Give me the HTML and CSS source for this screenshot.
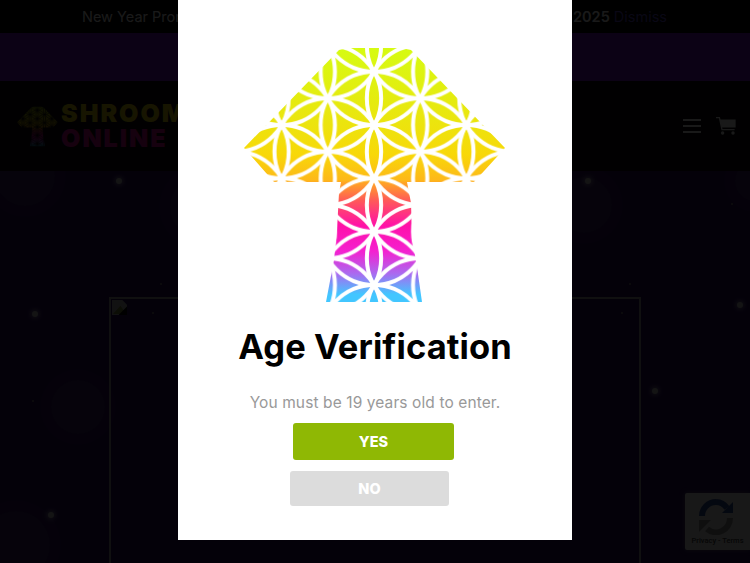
FILE: index.html
```
<html>
<head>
    <link rel="stylesheet" href="styles.css">
</head>

<body>
    <!-- shared mushroom artwork -->
    <svg class="defs" width="0" height="0">
        <defs>
            <linearGradient id="shroomFill" gradientUnits="userSpaceOnUse" x1="0" y1="48" x2="0" y2="302">
                <stop offset="0" stop-color="#d6fb12"/>
                <stop offset="0.3" stop-color="#ece40e"/>
                <stop offset="0.42" stop-color="#f8d808"/>
                <stop offset="0.52" stop-color="#fdb81a"/>
                <stop offset="0.53" stop-color="#ffa524"/>
                <stop offset="0.6" stop-color="#ff5a58"/>
                <stop offset="0.7" stop-color="#ff10a8"/>
                <stop offset="0.8" stop-color="#f420d0"/>
                <stop offset="0.89" stop-color="#a86cf0"/>
                <stop offset="0.97" stop-color="#42c6ff"/>
            </linearGradient>
            <pattern id="flower" patternUnits="userSpaceOnUse" x="375" y="71.7" width="92.38" height="53.33">
                <g fill="none" stroke="#000" stroke-width="4">
                    <circle cx="0" cy="-53.33" r="53.33"/>
                    <circle cx="0" cy="0" r="53.33"/>
                    <circle cx="0" cy="53.33" r="53.33"/>
                    <circle cx="0" cy="106.66" r="53.33"/>
                    <circle cx="92.38" cy="-53.33" r="53.33"/>
                    <circle cx="92.38" cy="0" r="53.33"/>
                    <circle cx="92.38" cy="53.33" r="53.33"/>
                    <circle cx="92.38" cy="106.66" r="53.33"/>
                    <circle cx="46.19" cy="-26.67" r="53.33"/>
                    <circle cx="46.19" cy="26.67" r="53.33"/>
                    <circle cx="46.19" cy="80" r="53.33"/>
                    <circle cx="-46.19" cy="-26.67" r="53.33"/>
                    <circle cx="-46.19" cy="26.67" r="53.33"/>
                    <circle cx="-46.19" cy="80" r="53.33"/>
                    <circle cx="138.57" cy="-26.67" r="53.33"/>
                    <circle cx="138.57" cy="26.67" r="53.33"/>
                    <circle cx="138.57" cy="80" r="53.33"/>
                </g>
            </pattern>
            <mask id="gaps" maskUnits="userSpaceOnUse" x="240" y="40" width="272" height="270">
                <rect x="240" y="40" width="272" height="270" fill="#fff"/>
                <rect x="240" y="40" width="272" height="270" fill="url(#flower)"/>
            </mask>
            <symbol id="shroom" viewBox="245 48 262 254">
                <path mask="url(#gaps)" fill="url(#shroomFill)" d="M349 48H402L412 50L506 148L475 182H408L412 203L413 237L418 267L423 302H327L335 260L338 230L340 193L342 182H275L245 148L340 50Z"/>
            </symbol>
        </defs>
    </svg>

    <div class="topbar">
        <span>New Year Promo</span>
        <span class="topbar-right"><b>2025</b> <a class="dismiss">Dismiss</a></span>
    </div>
    <div class="band"></div>

    <header class="site-header">
        <div class="logo">
            <svg class="logo-icon"><use href="#shroom"/></svg>
            <div class="logo-text">
                <div class="logo-top">SHROOM</div>
                <div class="logo-bottom">ONLINE</div>
            </div>
        </div>
        <div class="header-icons">
            <div class="burger"><i></i><i></i><i></i></div>
            <svg class="cart" viewBox="0 0 20 18">
                <path d="M0 .6H3.4L6 12.6H18.6" fill="none" stroke="#fff" stroke-width="1.3"/>
                <path d="M3.8 2.4H19.6V10.6H5.6Z" fill="#fff"/>
                <circle cx="6.6" cy="16" r="1.7" fill="#fff"/>
                <circle cx="17" cy="16" r="1.7" fill="#fff"/>
            </svg>
        </div>
    </header>

    <main class="content">
        <div class="bubble b1"></div>
        <div class="bubble b2"></div>
        <div class="bubble b3"></div>
        <div class="bubble b4"></div>
        <div class="bubble b5"></div>
        <div class="bubble b6"></div>
        <div class="dot d1"></div>
        <div class="dot d2"></div>
        <div class="dot d3"></div>
        <div class="dot d4"></div>
        <div class="dot d5"></div>
        <div class="dot d6"></div>
        <div class="speck s1"></div>
        <div class="speck s2"></div>
        <div class="speck s3"></div>
        <div class="speck s4"></div>
        <div class="speck s5"></div>
        <div class="speck s6"></div>

        <div class="frame">
            <svg class="broken" viewBox="0 0 16 16">
                <path d="M0 0H11L16 5V16H0Z" fill="#bbb"/>
                <path d="M1 15L9 6L15 15Z" fill="#7d8a3c"/>
                <path d="M16 16L7 16L16 7Z" fill="#000"/>
            </svg>
        </div>
    </main>

    <div class="recaptcha">
        <svg class="recaptcha-icon" viewBox="0 0 36 36">
            <path d="M4 17A14 14 0 0 1 18 3" fill="none" stroke="#3050a0" stroke-width="6"/>
            <path d="M18 3A14 14 0 0 1 29 9" fill="none" stroke="#3050a0" stroke-width="6"/>
            <path d="M24 14H35V3Z" fill="#3050a0"/>
            <path d="M32 19A14 14 0 0 1 9 30" fill="none" stroke="#999" stroke-width="6"/>
            <path d="M1 21H13L1 33Z" fill="#999"/>
        </svg>
        <div class="recaptcha-links">Privacy - Terms</div>
    </div>

    <!-- age gate -->
    <div class="overlay"></div>
    <div class="modal">
        <svg class="modal-art"><use href="#shroom"/></svg>
        <h1>Age Verification</h1>
        <p>You must be 19 years old to enter.</p>
        <button class="btn btn-yes">YES</button>
        <button class="btn btn-no">NO</button>
    </div>
</body>
</html>
```

FILE: styles.css
```
html, body {
    height: 100%;
    overflow: hidden;
}

body {
    font-family: Inter, "Open Sans", sans-serif;
    margin: 0;
    display: flex;
    flex-direction: column;
    background-color: #2a0a60;
    position: relative;
}

.defs {
    position: absolute;
}

.topbar {
    height: 33px;
    flex: none;
    box-sizing: border-box;
    padding: 0 83px 0 82px;
    display: flex;
    justify-content: space-between;
    align-items: center;
    background-color: #000;
    color: #fff;
    font-size: 14.5px;
}

.topbar b {
    font-weight: 600;
}

.dismiss {
    color: #5a48c8;
}

.band {
    height: 48px;
    flex: none;
    background-color: #7a14d8;
}

.site-header {
    height: 90px;
    flex: none;
    box-sizing: border-box;
    padding: 0 14px 0 17px;
    display: flex;
    justify-content: space-between;
    align-items: center;
    background-color: #0a0810;
}

.logo {
    display: flex;
    align-items: center;
    gap: 3px;
}

.logo-icon {
    width: 41px;
    height: 41px;
    opacity: 0.75;
}

.logo-text {
    font-weight: 900;
    font-size: 25px;
    line-height: 25px;
    letter-spacing: 2px;
}

.logo-top {
    color: #e8d810;
}

.logo-bottom {
    color: #e01098;
}

.header-icons {
    display: flex;
    align-items: center;
    gap: 15px;
}

.burger {
    display: flex;
    flex-direction: column;
    gap: 4.5px;
    width: 18px;
}

.burger i {
    display: block;
    height: 1.5px;
    background-color: #fff;
}

.cart {
    width: 20px;
    height: 18px;
}

.content {
    flex: 1;
    position: relative;
    overflow: hidden;
}

.frame {
    margin: 126px 0 0 109px;
    width: 532px;
    height: 400px;
    box-sizing: border-box;
    border: 2px solid #a0a0a0;
    border-bottom: none;
    position: relative;
}

.broken {
    width: 15px;
    height: 15px;
    display: block;
    margin: 1px;
}

/* background decoration */
.bubble {
    position: absolute;
    border-radius: 50%;
    background-color: rgba(255, 255, 255, 0.09);
    box-shadow: 0 0 0 11px rgba(255, 255, 255, 0.04);
}

.b1 { left: 51px; top: 209px; width: 54px; height: 54px; }
.b2 { left: -5px; top: -25px; width: 60px; height: 60px; }
.b3 { left: -18px; top: 340px; width: 68px; height: 68px; }
.b4 { left: 556px; top: 6px; width: 56px; height: 56px; }
.b5 { left: 170px; top: 5px; width: 62px; height: 62px; }
.b6 { left: 735px; top: -10px; width: 40px; height: 40px; }

.dot {
    position: absolute;
    width: 6px;
    height: 6px;
    border-radius: 50%;
    background-color: #c8c8c8;
    box-shadow: 0 0 4px 2px rgba(255, 255, 255, 0.4);
}

.d1 { left: 116px; top: 7px; }
.d2 { left: 32px; top: 140px; }
.d3 { left: 48px; top: 341px; }
.d4 { left: 585px; top: 7px; }
.d5 { left: 652px; top: 217px; }
.d6 { left: 737px; top: 131px; }

.speck {
    position: absolute;
    width: 2px;
    height: 2px;
    border-radius: 50%;
    background-color: #888;
}

.s1 { left: 160px; top: 112px; }
.s2 { left: 152px; top: 141px; }
.s3 { left: 32px; top: 229px; }
.s4 { left: 629px; top: 112px; }
.s5 { left: 621px; top: 141px; }
.s6 { left: 731px; top: 32px; }

.recaptcha {
    position: absolute;
    left: 685px;
    top: 493px;
    width: 65px;
    height: 57px;
    box-sizing: border-box;
    border-radius: 2px 0 0 2px;
    background-color: #f0f0f0;
    box-shadow: 0 0 5px rgba(128, 128, 128, 0.8);
    text-align: center;
}

.recaptcha-icon {
    width: 36px;
    height: 36px;
    display: block;
    margin: 6px 0 0 13px;
}

.recaptcha-links {
    font-family: Roboto, sans-serif;
    font-size: 7.5px;
    font-weight: 500;
    color: #444;
    white-space: nowrap;
    margin-top: 1px;
}

.overlay {
    position: absolute;
    left: 0;
    top: 0;
    width: 100%;
    height: 100%;
    background-color: rgba(0, 0, 0, 0.9);
}

.modal {
    position: absolute;
    left: 178px;
    top: 0;
    width: 394px;
    height: 540px;
    background-color: white;
    display: flex;
    flex-direction: column;
    align-items: center;
    text-align: center;
}

.modal-art {
    width: 262px;
    height: 254px;
    margin-top: 48px;
    flex: none;
}

h1 {
    font-size: 34.5px;
    line-height: 44px;
    font-weight: 700;
    letter-spacing: 0.1px;
    color: black;
    margin: 23px 0 0;
}

p {
    font-size: 15.5px;
    line-height: 24px;
    letter-spacing: 0.1px;
    color: #999;
    margin: 22px 0 0;
}

.btn {
    display: block;
    border: none;
    border-radius: 3px;
    color: white;
    font-family: Inter, sans-serif;
    font-weight: 800;
    font-size: 14.5px;
    padding: 0;
}

.btn-yes {
    width: 161px;
    height: 37px;
    margin: 8px 0 0 -3px;
    background-color: #8fb804;
}

.btn-no {
    width: 159px;
    height: 35px;
    margin: 11px 0 0 -11px;
    background-color: #dcdcdc;
}
```
